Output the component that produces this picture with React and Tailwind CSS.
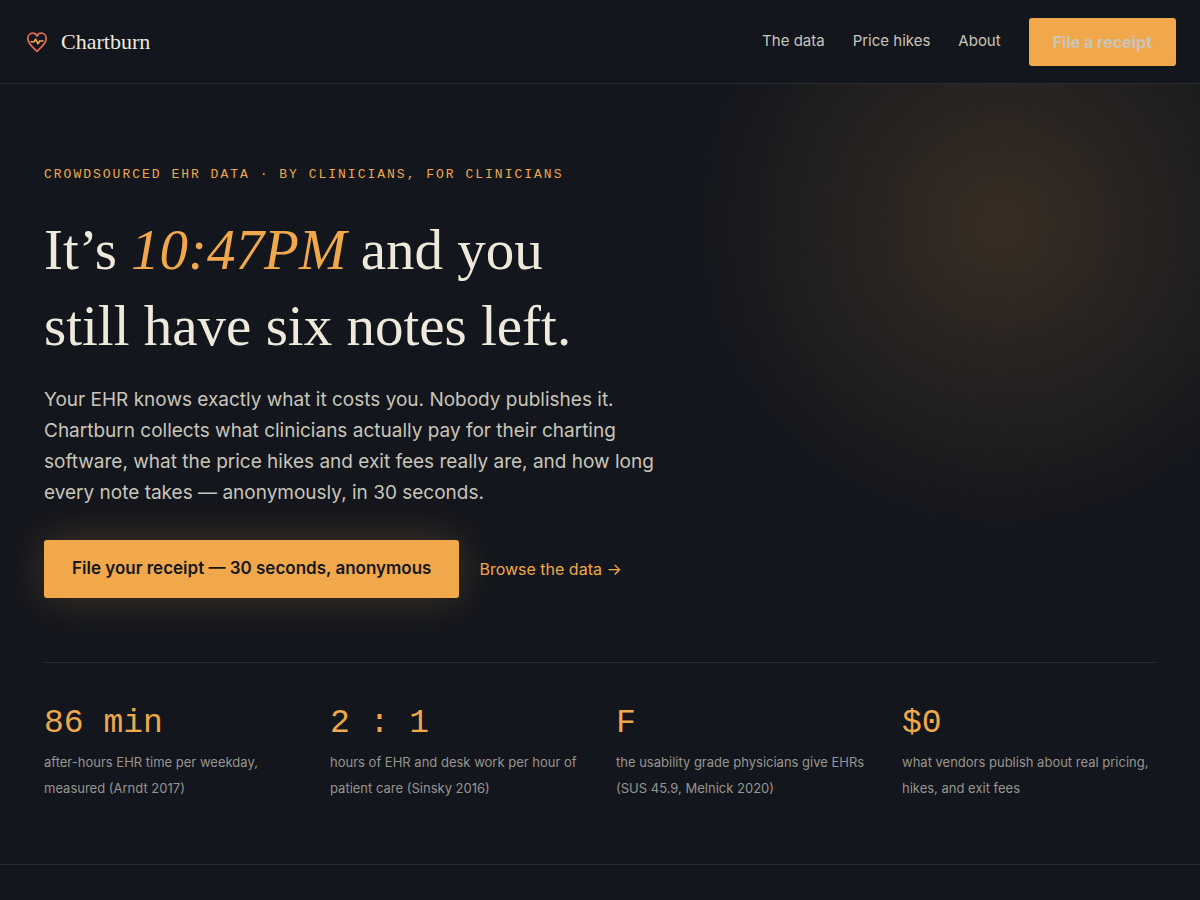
const STATS = [
  { value: '86 min', label: 'after-hours EHR time per weekday, measured (Arndt 2017)' },
  { value: '2 : 1', label: 'hours of EHR and desk work per hour of patient care (Sinsky 2016)' },
  { value: 'F', label: 'the usability grade physicians give EHRs (SUS 45.9, Melnick 2020)' },
  { value: '$0', label: 'what vendors publish about real pricing, hikes, and exit fees' },
]

const NAV = ['The data', 'Price hikes', 'About']

function Logo() {
  return (
    <svg width="26" height="26" viewBox="0 0 26 26" fill="none" strokeLinecap="round" strokeLinejoin="round" aria-hidden="true">
      <path d="M13 22.3C9.5 19.2 3.8 15 3.8 9.6C3.8 6.6 5.9 4.2 8.6 4.2C10.5 4.2 12.1 5.2 13 7C13.9 5.2 15.5 4.2 17.4 4.2C20.1 4.2 22.2 6.6 22.2 9.6C22.2 15 16.5 19.2 13 22.3Z" stroke="#e2695a" strokeWidth="1.8" />
      <path d="M7 12.8h3l1.6-2.6 2.4 4.6 1.7-2.8H19" stroke="#f0a84b" strokeWidth="1.6" />
    </svg>
  )
}

export default function App() {
  return (
    <div className="min-h-screen bg-[#13161d] text-[#c9c5ba] font-['Inter',sans-serif]">

      {/* Header */}
      <header className="flex items-center justify-between px-6 h-21 border-b border-[#262b33]">
        <a href="#" className="flex items-center gap-[11px] text-[#efe9dc] text-[22px] leading-8 font-['Liberation_Serif',serif]">
          <Logo />
          Chartburn
        </a>
        <nav className="flex items-center gap-7 text-[15px]">
          {NAV.map(item => <a key={item} href="#">{item}</a>)}
          <a href="#" className="flex items-center h-12 px-6 rounded-[3px] bg-[#f0a84b] text-[16px] font-bold">File a receipt</a>
        </nav>
      </header>

      {/* Hero */}
      <main className="border-b border-[#262b33] bg-[radial-gradient(circle_at_1002px_140px,#382d23_0,#13161d_314px)]">
        <div className="max-w-[1200px] mx-auto px-11 pt-20 pb-[63px]">
          <p className="text-[13px] leading-[22px] tracking-[2px] uppercase text-[#f0a84b] font-['Liberation_Mono',monospace]">
            Crowdsourced EHR data · by clinicians, for clinicians
          </p>
          <h1 className="mt-[26px] text-[#efe9dc] text-[57px] leading-[76px] font-['Liberation_Serif',serif]">
            It’s <em className="text-[#f0a84b]">10:47PM</em> and you<br />
            still have six notes left.
          </h1>
          <p className="mt-5 max-w-[624px] text-[19px] leading-[31px]">
            Your EHR knows exactly what it costs you. Nobody publishes it. Chartburn collects what clinicians actually pay for their charting software, what the price hikes and exit fees really are, and how long every note takes — anonymously, in 30 seconds.
          </p>

          <div className="mt-8 flex items-center gap-5">
            <a href="#" className="flex items-center h-[58px] px-7 rounded-[3px] bg-[#f0a84b] text-[#14171e] text-[17px] font-semibold shadow-[0_0_44px_rgba(240,168,75,0.22)]">
              File your receipt — 30 seconds, anonymous
            </a>
            <a href="#" className="text-[16px] text-[#f0a84b]">Browse the data →</a>
          </div>

          {/* Stats */}
          <dl className="mt-16 pt-10 border-t border-[#262b33] grid grid-cols-4 gap-8">
            {STATS.map(s => (
              <div key={s.value} className="flex flex-col">
                <dt className="order-2 mt-1 text-[13px] leading-[26px] text-[#97958f]">{s.label}</dt>
                <dd className="text-[33px] leading-[42px] text-[#f0a84b] font-['Liberation_Mono',monospace]">{s.value}</dd>
              </div>
            ))}
          </dl>
        </div>
      </main>
    </div>
  )
}
